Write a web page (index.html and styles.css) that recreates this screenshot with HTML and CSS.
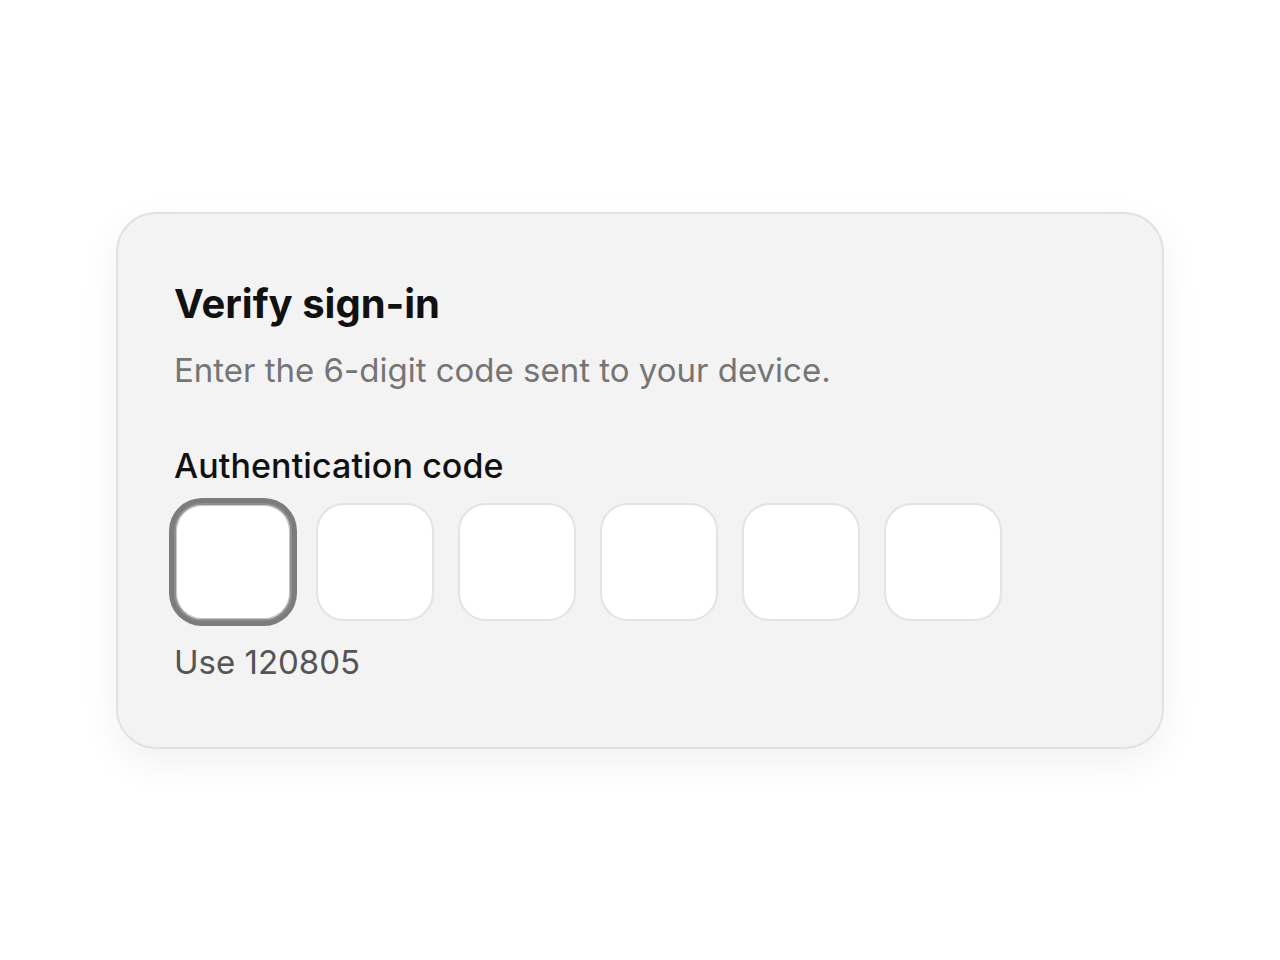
FILE: index.html
```html
<!DOCTYPE html>
<html lang="en">
<head>
<meta charset="utf-8">
<title>Verify sign-in</title>
<link rel="stylesheet" href="styles.css">
</head>
<body>
<main class="page">
  <section class="card">
    <h1 class="title">Verify sign-in</h1>
    <p class="subtitle">Enter the 6-digit code sent to your device.</p>
    <label class="label" for="d1">Authentication code</label>
    <div class="digits">
      <input class="digit focused" id="d1" type="text" maxlength="1" aria-label="Digit 1">
      <input class="digit" type="text" maxlength="1" aria-label="Digit 2">
      <input class="digit" type="text" maxlength="1" aria-label="Digit 3">
      <input class="digit" type="text" maxlength="1" aria-label="Digit 4">
      <input class="digit" type="text" maxlength="1" aria-label="Digit 5">
      <input class="digit" type="text" maxlength="1" aria-label="Digit 6">
    </div>
    <p class="hint">Use 120805</p>
  </section>
</main>
</body>
</html>
```

FILE: styles.css
```css
* { box-sizing: border-box; }
html, body { margin: 0; padding: 0; background: #ffffff; }
body { font-family: Inter, "Noto Sans", sans-serif; color: #111; }
.page {
  width: 1280px;
  height: 960px;
  display: flex;
  align-items: center;
  justify-content: center;
}
.card {
  width: 1048px;
  padding: 66px 56px 65px 56px;
  background: #f3f3f3;
  border: 2px solid #e1e1e1;
  border-radius: 40px;
  box-shadow: 0 14px 40px rgba(0,0,0,0.06);
  display: flex;
  flex-direction: column;
  align-items: flex-start;
}
.title {
  margin: 0;
  font-size: 40px;
  line-height: 48px;
  font-weight: 700;
  letter-spacing: 0;
  color: #111;
}
.subtitle {
  margin: 22px 0 0 0;
  font-size: 33px;
  line-height: 40px;
  font-weight: 400;
  color: #757575;
}
.label {
  margin-top: 56px;
  font-size: 34px;
  line-height: 40px;
  font-weight: 500;
  letter-spacing: 0.1px;
  color: #111;
}
.digits {
  margin-top: 17px;
  display: flex;
  gap: 24px;
}
.digit {
  width: 118px;
  height: 118px;
  border: 2px solid #e3e3e3;
  border-radius: 28px;
  background: #ffffff;
  font: inherit;
  font-size: 40px;
  text-align: center;
  outline: none;
}
.digit.focused {
  border-color: #8f8f8f;
  box-shadow: 0 0 0 5px #7c7c7c, inset 0 0 0 1px #c8c8c8;
}
.hint {
  margin: 21px 0 0 0;
  font-size: 33px;
  line-height: 40px;
  color: #555;
}
```
